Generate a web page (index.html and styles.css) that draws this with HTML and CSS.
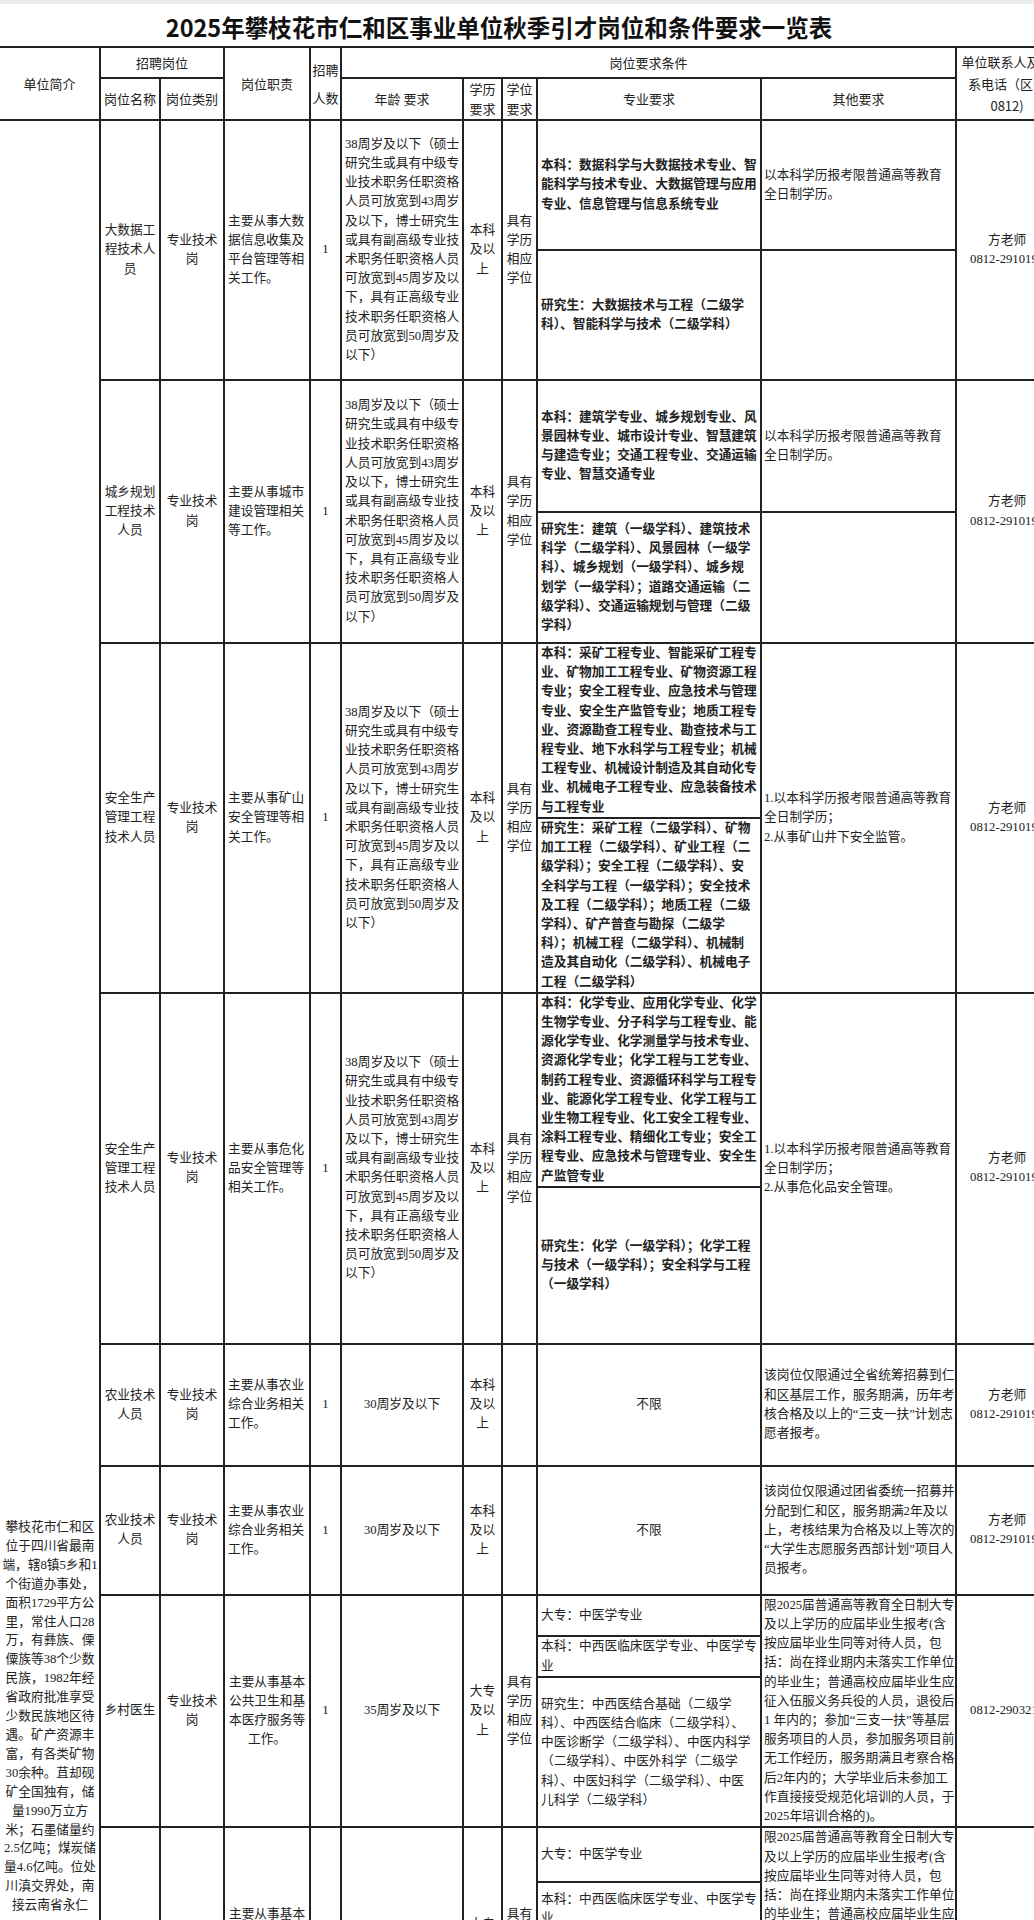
FILE: index.html
```html
<!DOCTYPE html>
<html lang="zh-CN">
<head>
<meta charset="utf-8">
<title>2025年攀枝花市仁和区事业单位秋季引才岗位和条件要求一览表</title>
<link rel="stylesheet" href="styles.css">
</head>
<body>
<div class="topbar"></div>
<h1 class="title">2025年攀枝花市仁和区事业单位秋季引才岗位和条件要求一览表</h1>
<table class="sheet">
<colgroup>
<col class="w-intro"><col class="w-name"><col class="w-type"><col class="w-duty"><col class="w-num"><col class="w-age"><col class="w-edu"><col class="w-deg"><col class="w-major"><col class="w-other"><col class="w-contact">
</colgroup>
<thead>
<tr class="h1">
<th rowspan="2">单位简介</th>
<th colspan="2">招聘岗位</th>
<th rowspan="2">岗位职责</th>
<th rowspan="2" class="num-h">招聘<br>人数</th>
<th colspan="5">岗位要求条件</th>
<th rowspan="2" class="contact-h">单位联系人及联<br>系电话（区号<br>0812)</th>
</tr>
<tr class="h2">
<th>岗位名称</th>
<th>岗位类别</th>
<th>年龄 要求</th>
<th class="two">学历<br>要求</th>
<th class="two">学位<br>要求</th>
<th>专业要求</th>
<th>其他要求</th>
</tr>
</thead>
<tbody>
<!-- 1 -->
<tr class="r1a">
<td rowspan="16" class="intro">攀枝花市仁和区<br>位于四川省最南<br>端，辖8镇5乡和1<br>个街道办事处，<br>面积1729平方公<br>里，常住人口28<br>万，有彝族、傈<br>僳族等38个少数<br>民族，1982年经<br>省政府批准享受<br>少数民族地区待<br>遇。矿产资源丰<br>富，有各类矿物<br>30余种。苴却砚<br>矿全国独有，储<br>量1990万立方<br>米；石墨储量约<br>2.5亿吨；煤炭储<br>量4.6亿吨。位处<br>川滇交界处，南<br>接云南省永仁</td>
<td rowspan="2" class="c">大数据工<br>程技术人<br>员</td>
<td rowspan="2" class="c">专业技术<br>岗</td>
<td rowspan="2">主要从事大数<br>据信息收集及<br>平台管理等相<br>关工作。</td>
<td rowspan="2" class="c">1</td>
<td rowspan="2">38周岁及以下（硕士<br>研究生或具有中级专<br>业技术职务任职资格<br>人员可放宽到43周岁<br>及以下，博士研究生<br>或具有副高级专业技<br>术职务任职资格人员<br>可放宽到45周岁及以<br>下，具有正高级专业<br>技术职务任职资格人<br>员可放宽到50周岁及<br>以下）</td>
<td rowspan="2" class="c">本科<br>及以<br>上</td>
<td rowspan="2" class="c">具有<br>学历<br>相应<br>学位</td>
<td class="b">本科：数据科学与大数据技术专业、智<br>能科学与技术专业、大数据管理与应用<br>专业、信息管理与信息系统专业</td>
<td class="o">以本科学历报考限普通高等教育<br>全日制学历。</td>
<td rowspan="2" class="c ct">方老师<br>0812-2910195</td>
</tr>
<tr class="r1b">
<td class="b">研究生：大数据技术与工程（二级学<br>科）、智能科学与技术（二级学科）</td>
<td class="o"></td>
</tr>
<!-- 2 -->
<tr class="r2a">
<td rowspan="2" class="c">城乡规划<br>工程技术<br>人员</td>
<td rowspan="2" class="c">专业技术<br>岗</td>
<td rowspan="2">主要从事城市<br>建设管理相关<br>等工作。</td>
<td rowspan="2" class="c">1</td>
<td rowspan="2">38周岁及以下（硕士<br>研究生或具有中级专<br>业技术职务任职资格<br>人员可放宽到43周岁<br>及以下，博士研究生<br>或具有副高级专业技<br>术职务任职资格人员<br>可放宽到45周岁及以<br>下，具有正高级专业<br>技术职务任职资格人<br>员可放宽到50周岁及<br>以下）</td>
<td rowspan="2" class="c">本科<br>及以<br>上</td>
<td rowspan="2" class="c">具有<br>学历<br>相应<br>学位</td>
<td class="b">本科：建筑学专业、城乡规划专业、风<br>景园林专业、城市设计专业、智慧建筑<br>与建造专业；交通工程专业、交通运输<br>专业、智慧交通专业</td>
<td class="o">以本科学历报考限普通高等教育<br>全日制学历。</td>
<td rowspan="2" class="c ct">方老师<br>0812-2910195</td>
</tr>
<tr class="r2b">
<td class="b">研究生：建筑（一级学科）、建筑技术<br>科学（二级学科）、风景园林（一级学<br>科）、城乡规划（一级学科）、城乡规<br>划学（一级学科）；道路交通运输（二<br>级学科）、交通运输规划与管理（二级<br>学科）</td>
<td class="o"></td>
</tr>
<!-- 3 -->
<tr class="r3a">
<td rowspan="2" class="c">安全生产<br>管理工程<br>技术人员</td>
<td rowspan="2" class="c">专业技术<br>岗</td>
<td rowspan="2">主要从事矿山<br>安全管理等相<br>关工作。</td>
<td rowspan="2" class="c">1</td>
<td rowspan="2">38周岁及以下（硕士<br>研究生或具有中级专<br>业技术职务任职资格<br>人员可放宽到43周岁<br>及以下，博士研究生<br>或具有副高级专业技<br>术职务任职资格人员<br>可放宽到45周岁及以<br>下，具有正高级专业<br>技术职务任职资格人<br>员可放宽到50周岁及<br>以下）</td>
<td rowspan="2" class="c">本科<br>及以<br>上</td>
<td rowspan="2" class="c">具有<br>学历<br>相应<br>学位</td>
<td class="b">本科：采矿工程专业、智能采矿工程专<br>业、矿物加工工程专业、矿物资源工程<br>专业；安全工程专业、应急技术与管理<br>专业、安全生产监管专业；地质工程专<br>业、资源勘查工程专业、勘查技术与工<br>程专业、地下水科学与工程专业；机械<br>工程专业、机械设计制造及其自动化专<br>业、机械电子工程专业、应急装备技术<br>与工程专业</td>
<td rowspan="2" class="o">1.以本科学历报考限普通高等教育<br>全日制学历；<br>2.从事矿山井下安全监管。</td>
<td rowspan="2" class="c ct">方老师<br>0812-2910195</td>
</tr>
<tr class="r3b">
<td class="b">研究生：采矿工程（二级学科）、矿物<br>加工工程（二级学科）、矿业工程（二<br>级学科）；安全工程（二级学科）、安<br>全科学与工程（一级学科）；安全技术<br>及工程（二级学科）；地质工程（二级<br>学科）、矿产普查与勘探（二级学<br>科）；机械工程（二级学科）、机械制<br>造及其自动化（二级学科）、机械电子<br>工程（二级学科）</td>
</tr>
<!-- 4 -->
<tr class="r4a">
<td rowspan="2" class="c">安全生产<br>管理工程<br>技术人员</td>
<td rowspan="2" class="c">专业技术<br>岗</td>
<td rowspan="2">主要从事危化<br>品安全管理等<br>相关工作。</td>
<td rowspan="2" class="c">1</td>
<td rowspan="2">38周岁及以下（硕士<br>研究生或具有中级专<br>业技术职务任职资格<br>人员可放宽到43周岁<br>及以下，博士研究生<br>或具有副高级专业技<br>术职务任职资格人员<br>可放宽到45周岁及以<br>下，具有正高级专业<br>技术职务任职资格人<br>员可放宽到50周岁及<br>以下）</td>
<td rowspan="2" class="c">本科<br>及以<br>上</td>
<td rowspan="2" class="c">具有<br>学历<br>相应<br>学位</td>
<td class="b">本科：化学专业、应用化学专业、化学<br>生物学专业、分子科学与工程专业、能<br>源化学专业、化学测量学与技术专业、<br>资源化学专业；化学工程与工艺专业、<br>制药工程专业、资源循环科学与工程专<br>业、能源化学工程专业、化学工程与工<br>业生物工程专业、化工安全工程专业、<br>涂料工程专业、精细化工专业；安全工<br>程专业、应急技术与管理专业、安全生<br>产监管专业</td>
<td rowspan="2" class="o">1.以本科学历报考限普通高等教育<br>全日制学历；<br>2.从事危化品安全管理。</td>
<td rowspan="2" class="c ct">方老师<br>0812-2910195</td>
</tr>
<tr class="r4b">
<td class="b">研究生：化学（一级学科）；化学工程<br>与技术（一级学科）；安全科学与工程<br>（一级学科）</td>
</tr>
<!-- 5 -->
<tr class="r5">
<td class="c">农业技术<br>人员</td>
<td class="c">专业技术<br>岗</td>
<td>主要从事农业<br>综合业务相关<br>工作。</td>
<td class="c">1</td>
<td class="c">30周岁及以下</td>
<td class="c">本科<br>及以<br>上</td>
<td class="c"></td>
<td class="c">不限</td>
<td class="o">该岗位仅限通过全省统筹招募到仁<br>和区基层工作，服务期满，历年考<br>核合格及以上的“三支一扶”计划志<br>愿者报考。</td>
<td class="c ct">方老师<br>0812-2910195</td>
</tr>
<!-- 6 -->
<tr class="r6">
<td class="c">农业技术<br>人员</td>
<td class="c">专业技术<br>岗</td>
<td>主要从事农业<br>综合业务相关<br>工作。</td>
<td class="c">1</td>
<td class="c">30周岁及以下</td>
<td class="c">本科<br>及以<br>上</td>
<td class="c"></td>
<td class="c">不限</td>
<td class="o">该岗位仅限通过团省委统一招募并<br>分配到仁和区，服务期满2年及以<br>上，考核结果为合格及以上等次的<br>“大学生志愿服务西部计划”项目人<br>员报考。</td>
<td class="c ct">方老师<br>0812-2910195</td>
</tr>
<!-- 7 -->
<tr class="r7a">
<td rowspan="3" class="c">乡村医生</td>
<td rowspan="3" class="c">专业技术<br>岗</td>
<td rowspan="3" class="c">主要从事基本<br>公共卫生和基<br>本医疗服务等<br>工作。</td>
<td rowspan="3" class="c">1</td>
<td rowspan="3" class="c">35周岁及以下</td>
<td rowspan="3" class="c">大专<br>及以<br>上</td>
<td rowspan="3" class="c">具有<br>学历<br>相应<br>学位</td>
<td>大专：中医学专业</td>
<td rowspan="3" class="o">限2025届普通高等教育全日制大专<br>及以上学历的应届毕业生报考(含<br>按应届毕业生同等对待人员，包<br>括：尚在择业期内未落实工作单位<br>的毕业生；普通高校应届毕业生应<br>征入伍服义务兵役的人员，退役后<br>1 年内的；参加“三支一扶”等基层<br>服务项目的人员，参加服务项目前<br>无工作经历，服务期满且考察合格<br>后2年内的；大学毕业后未参加工<br>作直接接受规范化培训的人员，于<br>2025年培训合格的)。</td>
<td rowspan="3" class="c ct">0812-2903215</td>
</tr>
<tr class="r7b">
<td>本科：中西医临床医学专业、中医学专<br>业</td>
</tr>
<tr class="r7c">
<td>研究生：中西医结合基础（二级学<br>科）、中西医结合临床（二级学科）、<br>中医诊断学（二级学科）、中医内科学<br>（二级学科）、中医外科学（二级学<br>科）、中医妇科学（二级学科）、中医<br>儿科学（二级学科）</td>
</tr>
<!-- 8 -->
<tr class="r8a">
<td rowspan="3" class="c">乡村医生</td>
<td rowspan="3" class="c">专业技术<br>岗</td>
<td rowspan="3" class="c">主要从事基本<br>公共卫生和基<br>本医疗服务等<br>工作。</td>
<td rowspan="3" class="c">1</td>
<td rowspan="3" class="c">35周岁及以下</td>
<td rowspan="3" class="c">大专<br>及以<br>上</td>
<td rowspan="3" class="c">具有<br>学历<br>相应<br>学位</td>
<td>大专：中医学专业</td>
<td rowspan="3" class="o">限2025届普通高等教育全日制大专<br>及以上学历的应届毕业生报考(含<br>按应届毕业生同等对待人员，包<br>括：尚在择业期内未落实工作单位<br>的毕业生；普通高校应届毕业生应<br>征入伍服义务兵役的人员，退役后<br>1 年内的；参加“三支一扶”等基层<br>服务项目的人员，参加服务项目前<br>无工作经历，服务期满且考察合格<br>后2年内的；大学毕业后未参加工<br>作直接接受规范化培训的人员，于<br>2025年培训合格的)。</td>
<td rowspan="3" class="c ct">0812-2903215</td>
</tr>
<tr class="r8b">
<td>本科：中西医临床医学专业、中医学专<br>业</td>
</tr>
<tr class="r8c">
<td>研究生：中西医结合基础（二级学<br>科）、中西医结合临床（二级学科）、<br>中医诊断学（二级学科）、中医内科学<br>（二级学科）、中医外科学（二级学<br>科）、中医妇科学（二级学科）、中医<br>儿科学（二级学科）</td>
</tr>
</tbody>
</table>
</body>
</html>
```
FILE: styles.css
```css
* { box-sizing: border-box; }
html, body { margin: 0; padding: 0; background: #fff; }
body {
  width: 1034px;
  overflow: hidden;
  font-family: "Liberation Serif", "Noto Sans CJK SC", serif;
  color: #222;
}
.topbar { height: 4px; background: #ececec; }
.title {
  margin: 0;
  height: 42px;
  padding: 4px 36px 0 0;
  line-height: 38px;
  text-align: center;
  font-family: "Noto Sans CJK SC", sans-serif;
  font-size: 23.5px;
  font-weight: 700;
  color: #111;
  white-space: nowrap;
}
.sheet {
  margin-left: -2px;
  border-collapse: collapse;
  table-layout: fixed;
  width: 1059px;
}
.w-intro { width: 101px; }
.w-name { width: 60px; }
.w-type { width: 64px; }
.w-duty { width: 86px; }
.w-num { width: 31px; }
.w-age { width: 122px; }
.w-edu { width: 39px; }
.w-deg { width: 35px; }
.w-major { width: 224px; }
.w-other { width: 195px; }
.w-contact { width: 102px; }
.sheet th, .sheet td {
  border: 2px solid #222;
  padding: 0 3px;
  vertical-align: middle;
  white-space: nowrap;
  overflow: hidden;
}
.sheet th {
  font-family: "Noto Sans CJK SC", sans-serif;
  font-size: 13px;
  font-weight: 400;
  line-height: 20px;
  text-align: center;
  padding: 0 1px;
}
.sheet th.num-h { line-height: 28px; }
.sheet th.contact-h { line-height: 22px; }
.h1 { height: 31px; }
.h2 { height: 39px; }
.sheet td {
  font-size: 12.7px;
  line-height: 19.2px;
  text-align: left;
}
.sheet td.c { text-align: center; }
.sheet td.b { font-weight: 700; }
.sheet td.o { padding: 0 1px 0 2px; }
.sheet td.ct { padding: 0; }
.sheet td.intro {
  vertical-align: top;
  text-align: center;
  padding: 1397px 0 0 1px;
  line-height: 18.9px;
}
.r1a { height: 130px; }
.r1b { height: 130px; }
.r2a { height: 132px; }
.r2b { height: 131px; }
.r3a { height: 172px; }
.r3b { height: 175px; }
.r4a { height: 193px; }
.r4b { height: 157px; }
.r5 { height: 122px; }
.r6 { height: 129px; }
.r7a { height: 40px; }
.r7b { height: 41px; }
.r7c { height: 147px; }
.r8a { height: 54px; }
.r8b { height: 53px; }
.r8c { height: 121px; }
```
